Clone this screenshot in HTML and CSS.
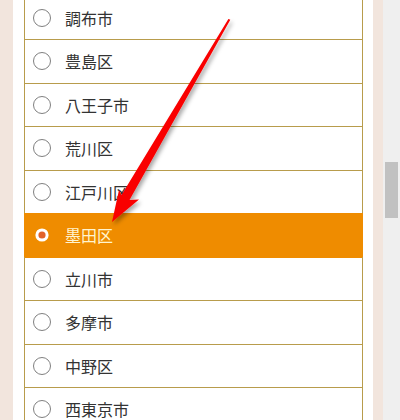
FILE: index.html
```html
<!DOCTYPE html>
<html lang="ja">
<head>
<meta charset="utf-8">
<title>地域選択</title>
<link rel="stylesheet" href="styles.css">
</head>
<body>
<div class="page">
  <div class="side side-left"></div>
  <div class="panel">
    <ul class="list">
      <li class="row"><span class="radio"></span><span class="label">調布市</span></li>
      <li class="row"><span class="radio"></span><span class="label">豊島区</span></li>
      <li class="row"><span class="radio"></span><span class="label">八王子市</span></li>
      <li class="row"><span class="radio"></span><span class="label">荒川区</span></li>
      <li class="row"><span class="radio"></span><span class="label">江戸川区</span></li>
      <li class="row selected"><span class="radio radio-on"><svg width="18" height="18" viewBox="0 0 18 18"><circle cx="9" cy="9" r="6.6" fill="#fff"/><circle cx="9" cy="9" r="3.6" fill="#e2622a"/></svg></span><span class="label">墨田区</span></li>
      <li class="row"><span class="radio"></span><span class="label">立川市</span></li>
      <li class="row"><span class="radio"></span><span class="label">多摩市</span></li>
      <li class="row"><span class="radio"></span><span class="label">中野区</span></li>
      <li class="row"><span class="radio"></span><span class="label">西東京市</span></li>
    </ul>
  </div>
  <div class="side side-right"></div>
  <div class="scrollbar"><div class="thumb"></div></div>
  <svg class="arrow" width="400" height="420" viewBox="0 0 400 420">
    <defs>
      <filter id="sh" x="-20%" y="-20%" width="140%" height="140%">
        <feDropShadow dx="2" dy="3" stdDeviation="2.2" flood-color="#000" flood-opacity="0.35"/>
      </filter>
    </defs>
    <polygon filter="url(#sh)" fill="#f90000" points="112,222 139,199.5 129.5,200 230.3,19.8 228.4,19 121.5,195 119,190"/>
  </svg>
</div>
</body>
</html>
```
FILE: styles.css
```css
html, body {
  margin: 0;
  padding: 0;
  background: #ffffff;
}
body {
  font-family: "Noto Sans CJK JP", "Noto Sans", sans-serif;
}
.page {
  position: relative;
  width: 400px;
  height: 420px;
  overflow: hidden;
  display: flex;
}
.side {
  background: #f2e5dd;
  height: 100%;
}
.side-left {
  width: 13px;
}
.side-right {
  width: 10px;
}
.panel {
  width: 360px;
  padding: 0 10px 0 11px;
  box-sizing: border-box;
  background: #ffffff;
}
.list {
  list-style: none;
  margin: -4.5px 0 0 0;
  padding: 0;
  border-left: 1px solid #b89c4c;
  border-right: 1px solid #b89c4c;
}
.row {
  height: 42.5px;
  border-top: 1px solid #b89c4c;
  display: flex;
  align-items: center;
  color: #333333;
  font-size: 16px;
  background: #ffffff;
}
.row.selected {
  background: #ef8c00;
  border-top-color: #ef8c00;
  color: #fff4cf;
  margin: 0 -1px;
  padding: 0 1px;
}
.row.selected + .row {
  border-top-color: #ef8c00;
}
.radio {
  width: 18px;
  height: 18px;
  margin-left: 8px;
  box-sizing: border-box;
  border: 1px solid #808080;
  border-radius: 50%;
  flex: none;
}
.radio-on {
  border: none;
  display: flex;
}
.label {
  margin-left: 14px;
  letter-spacing: 0;
  line-height: 1;
}
.scrollbar {
  width: 17px;
  background: #efefef;
  height: 100%;
  padding: 162px 2px 0 2px;
  box-sizing: border-box;
}
.thumb {
  height: 56px;
  background: #c1c1c1;
}
.arrow {
  position: absolute;
  left: 0;
  top: 0;
  pointer-events: none;
}
```
